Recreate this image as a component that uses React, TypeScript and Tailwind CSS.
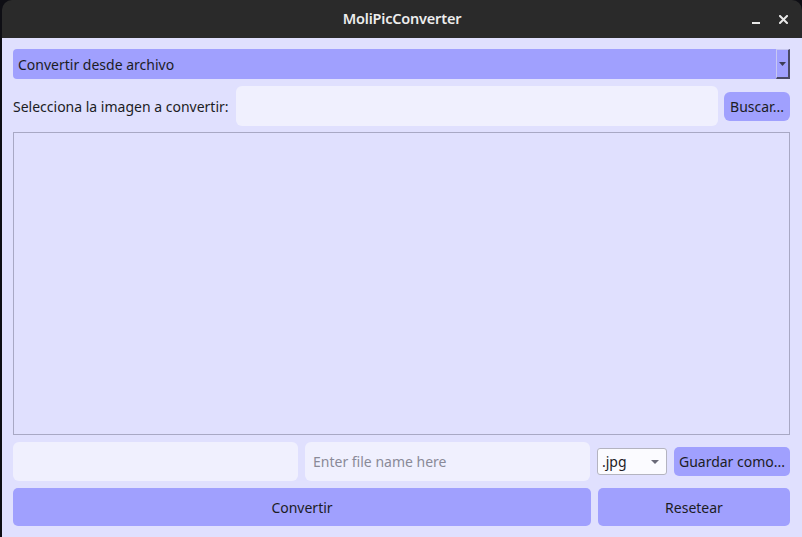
export default function App() {
  const font = "font-['Noto_Sans','Open_Sans',sans-serif]";
  return (
    <div className={`w-[802px] h-[537px] bg-[#0e0e14] flex ${font}`}>
      <div className="ml-[2px] flex-1 flex flex-col rounded-t-[10px] overflow-hidden">
        {/* title bar */}
        <div className="h-[38px] bg-[#2a2a2a] relative flex items-center justify-center shrink-0">
          <span className="text-[#ededed] text-[14.5px] font-semibold tracking-[-0.2px]">MoliPicConverter</span>
          <div className="absolute right-[8px] top-0 h-full flex items-center gap-[19px]">
            <span className="block w-[8px] h-[2px] bg-[#e8e8e8] mt-[7px]" />
            <svg width="9" height="9" viewBox="0 0 9 9" className="mr-[6px]">
              <path d="M1 1L8 8M8 1L1 8" stroke="#e8e8e8" strokeWidth="2" strokeLinecap="square" />
            </svg>
          </div>
        </div>

        {/* content */}
        <div className="flex-1 bg-[#e0e0fe] pt-[11px] pl-[11px] pr-[12px] pb-[11px] flex flex-col gap-[7px] text-[14px] text-[#1c1c24]">
          {/* mode combo */}
          <div className="h-[30px] bg-[#a0a0fe] rounded-l-[4px] flex items-center">
            <span className="pl-[5px] flex-1">Convertir desde archivo</span>
            <div className="w-[14px] h-[30px] border border-[#c8c8f2] border-r-[#4a4a66] border-b-[#4a4a66] border-r-2 border-b-2 flex items-center justify-center">
              <svg width="7" height="4" viewBox="0 0 7 4">
                <path d="M0 0H7L3.5 4Z" fill="#3c3c55" />
              </svg>
            </div>
          </div>

          {/* file row */}
          <div className="h-[40px] flex items-center gap-[6px]">
            <span className="pr-[1px]">Selecciona la imagen a convertir:</span>
            <div className="flex-1 h-[40px] bg-[#f0f0fe] rounded-[6px]" />
            <button className="w-[66px] h-[29px] bg-[#a0a0fe] rounded-[6px] text-[14px] text-[#1c1c24]">Buscar...</button>
          </div>

          {/* preview */}
          <div className="h-[303px] border border-[#a8a8c4] bg-[#e0e0fe] -mt-[1px]" />

          {/* save row */}
          <div className="h-[39px] flex items-center gap-[7px]">
            <div className="w-[285px] h-[39px] bg-[#f0f0fe] rounded-[6px]" />
            <div className="w-[285px] h-[39px] bg-[#f0f0fe] rounded-[6px] flex items-center pl-[8px] text-[#8a8a98]">
              Enter file name here
            </div>
            <div className="w-[70px] h-[27px] bg-[#fbfbff] border border-[#b4b4c0] rounded-[3px] flex items-center justify-between pl-[4px] pr-[7px]">
              <span>.jpg</span>
              <svg width="8" height="4" viewBox="0 0 8 4">
                <path d="M0 0H8L4 4Z" fill="#6a6a78" />
              </svg>
            </div>
            <button className="flex-1 h-[29px] bg-[#a0a0fe] rounded-[5px] text-[14px] text-[#1c1c24] whitespace-nowrap">Guardar como...</button>
          </div>

          {/* action row */}
          <div className="h-[38px] flex gap-[7px]">
            <button className="w-[578px] h-[38px] bg-[#a0a0fe] rounded-[5px] text-[14px] text-[#1c1c24]">Convertir</button>
            <button className="flex-1 h-[38px] bg-[#a0a0fe] rounded-[5px] text-[14px] text-[#1c1c24]">Resetear</button>
          </div>
        </div>
      </div>
    </div>
  );
}
